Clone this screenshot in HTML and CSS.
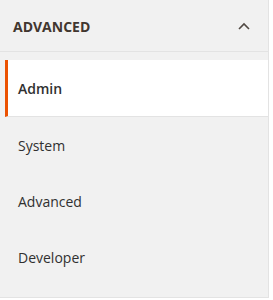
FILE: index.html
```html
<!DOCTYPE html>
<html lang="en">

<head>
    <title>Configuration</title>
    <meta charset="UTF-8">
    <link rel="stylesheet" href="styles.css">
</head>

<body>
    <div class="nav-panel">
        <div class="nav-title">
            <strong>Advanced</strong>
            <svg class="nav-toggle" width="12" height="8" viewBox="0 0 12 8">
                <path d="M1 7 L6 2 L11 7" fill="none" stroke="#514943" stroke-width="1.6" />
            </svg>
        </div>
        <ul class="nav-items">
            <li class="nav-item active"><a href="#">Admin</a></li>
            <li class="nav-item"><a href="#">System</a></li>
            <li class="nav-item"><a href="#">Advanced</a></li>
            <li class="nav-item"><a href="#">Developer</a></li>
        </ul>
    </div>
</body>

</html>
```

FILE: styles.css
```css
* {
    box-sizing: border-box;
    font-family: 'Open Sans', sans-serif;
}

body {
    margin: 0;
    background-color: #ffffff;
}

.nav-panel {
    width: 269px;
    background-color: #f1f1f1;
    border-right: 1px solid #e3e3e3;
    border-bottom: 1px solid #e3e3e3;
}

.nav-title {
    height: 52px;
    display: flex;
    align-items: center;
    padding: 1px 18px 0 13px;
    border-bottom: 1px solid #e3e3e3;
}

.nav-title strong {
    flex: 1;
    font-size: 14px;
    font-weight: 700;
    text-transform: uppercase;
    color: #41362f;
}

.nav-items {
    list-style: none;
    margin: 0;
    padding: 8px 0 12px 5px;
}

.nav-item {
    border-left: 3px solid transparent;
}

.nav-item a {
    display: flex;
    align-items: center;
    height: 56px;
    padding-left: 10px;
    font-size: 14px;
    color: #303030;
    text-decoration: none;
}

.nav-item.active {
    background-color: #ffffff;
    border-left-color: #eb5202;
    border-bottom: 1px solid #e3e3e3;
}

.nav-item.active a {
    font-weight: 600;
}
```
